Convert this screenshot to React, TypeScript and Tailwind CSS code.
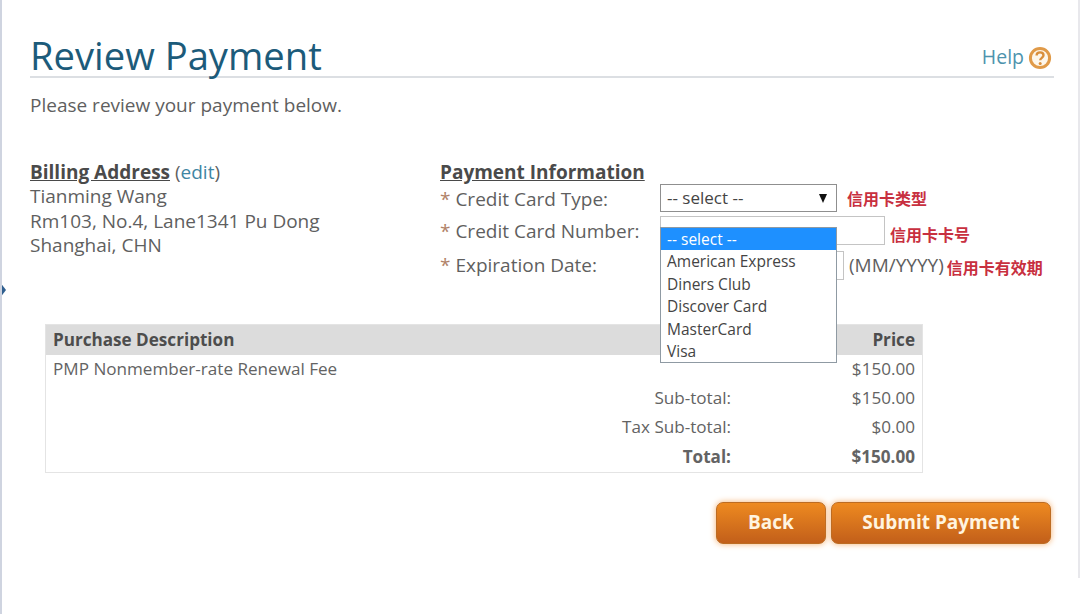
import React from "react";

const cardOptions = ["American Express", "Diners Club", "Discover Card", "MasterCard", "Visa"];

function HelpIcon() {
  return (
    <svg width="24" height="24" viewBox="0 0 24 24" aria-hidden="true" className="mt-[2px]">
      <circle cx="12" cy="12" r="9.6" fill="#fdf6ea" stroke="#e09a48" strokeWidth="3" />
      <path d="M8.6 9.6c0-2 1.5-3.2 3.5-3.2s3.4 1.2 3.4 2.9c0 2.5-3.3 2.6-3.3 5" fill="none" stroke="#d98f3c" strokeWidth="2.4" />
      <circle cx="12.2" cy="17.4" r="1.5" fill="#d98f3c" />
    </svg>
  );
}

function Label({ text }: { text: string }) {
  return (
    <div className="w-[220px] shrink-0 text-[19px] leading-[26px] text-[#5f5f5f]">
      <span className="text-[#b08268]">*</span> {text}
    </div>
  );
}

function Note({ text }: { text: string }) {
  return (
    <span className="text-[16px] leading-[20px] font-bold text-[#c8303f] font-['Noto_Sans_CJK_SC',sans-serif]">{text}</span>
  );
}

function TotalRow({ label, value, bold }: { label: string; value: string; bold?: boolean }) {
  return (
    <div className={`flex h-[29.5px] items-center text-[#636363] ${bold ? "font-bold text-[#444]" : ""}`}>
      <div className="w-[685px] text-right">{label}</div>
      <div className="flex-1 pr-[7px] text-right">{value}</div>
    </div>
  );
}

const buttonClass =
  "h-[42px] rounded-[7px] border border-[#bd6c22] bg-gradient-to-b from-[#ee8a20] to-[#c25f1a] text-[19px] font-bold text-[#fff4e0] shadow-[0_0_6px_#f5b070]";

export default function App() {
  return (
    <div className="relative h-[614px] w-[1080px] overflow-hidden border-l-2 border-[#cfd4e0] bg-white font-['Open_Sans',sans-serif]">
      <div className="absolute top-[282px] left-[-2px] h-0 w-0 border-y-[8px] border-l-[6px] border-y-transparent border-l-[#2f5f8f]" />
      <div className="absolute top-0 right-0 h-[578px] w-[2px] bg-[#e8e8ec]" />

      <div className="pt-[30px] pr-[26px] pl-[28px]">
        <div className="flex h-[48px] items-center justify-between border-b-2 border-[#dcdfe3]">
          <h1 className="mt-[4px] text-[38.2px] leading-[48px] text-[#1c5b7a]">Review Payment</h1>
          <div className="mt-[8px] mr-[2px] flex items-center gap-[4px] text-[19.5px] text-[#4d93ad]">
            Help <HelpIcon />
          </div>
        </div>

        <p className="mt-[14px] text-[19px] leading-[26px] text-[#5f5f5f]">Please review your payment below.</p>

        <div className="mt-[42px] flex">
          <div className="w-[410px] shrink-0 text-[19px] leading-[24.5px] text-[#5f5f5f]">
            <div className="leading-[24px]">
              <span className="font-bold text-[#4a4a4a] underline">Billing Address</span>{" "}
              (<span className="text-[#3f86a3]">edit</span>)
            </div>
            <div>Tianming Wang</div>
            <div>Rm103, No.4, Lane1341 Pu Dong</div>
            <div>Shanghai, CHN</div>
          </div>

          <div className="relative flex-1">
            <div className="text-[19px] leading-[24px] font-bold text-[#4a4a4a] underline">Payment Information</div>

            <div className="flex h-[30px] items-center">
              <Label text="Credit Card Type:" />
              <div className="mb-[2px] flex h-[28px] w-[177px] items-center justify-between border border-[#8f8f8f] bg-white pr-[9px] pl-[6px] text-[17px] text-[#444]">
                -- select --
                <span className="h-0 w-0 border-x-[4.5px] border-t-[9px] border-x-transparent border-t-[#111]" />
              </div>
              <span className="ml-[10px]"><Note text="信用卡类型" /></span>
            </div>

            <div className="mt-[2px] flex h-[30px] items-center">
              <Label text="Credit Card Number:" />
              <div className="mb-[2px] h-[29px] w-[225px] border border-[#c4c4c4] bg-white" />
              <span className="mt-[8px] ml-[5px]"><Note text="信用卡卡号" /></span>
            </div>

            <div className="mt-[4px] flex h-[30px] items-center">
              <Label text="Expiration Date:" />
              <div className="h-[29px] w-[184px] border border-[#c4c4c4] bg-white" />
              <span className="ml-[5px] text-[19px] text-[#5f5f5f]">(MM/YYYY)</span>
              <span className="mt-[6px] ml-[3px]"><Note text="信用卡有效期" /></span>
            </div>

            {/* open select list */}
            <div className="absolute top-[67px] left-[220px] z-10 w-[177px] border border-[#8f9aa3] bg-white text-[15.5px] leading-[22.4px] text-[#444]">
              <div className="bg-[#1e90ff] pl-[6px] text-white">-- select --</div>
              {cardOptions.map((name) => (
                <div key={name} className="pl-[6px]">{name}</div>
              ))}
            </div>
          </div>
        </div>

        <div className="mt-[44px] ml-[15px] h-[148.5px] w-[878px] border border-[#e4e4e4] text-[17.1px]">
          <div className="flex h-[30px] items-center justify-between bg-[#dcdcdc] px-[7px] font-bold text-[#4d4d4d]">
            <span>Purchase Description</span>
            <span>Price</span>
          </div>
          <div className="flex h-[28px] items-center justify-between px-[7px] text-[#636363]">
            <span>PMP Nonmember-rate Renewal Fee</span>
            <span>$150.00</span>
          </div>
          <TotalRow label="Sub-total:" value="$150.00" />
          <TotalRow label="Tax Sub-total:" value="$0.00" />
          <TotalRow label="Total:" value="$150.00" bold />
        </div>

        <div className="mt-[29px] flex justify-end gap-[5px] pr-[3px]">
          <button className={`${buttonClass} w-[110px]`}>Back</button>
          <button className={`${buttonClass} w-[220px]`}>Submit Payment</button>
        </div>
      </div>
    </div>
  );
}
